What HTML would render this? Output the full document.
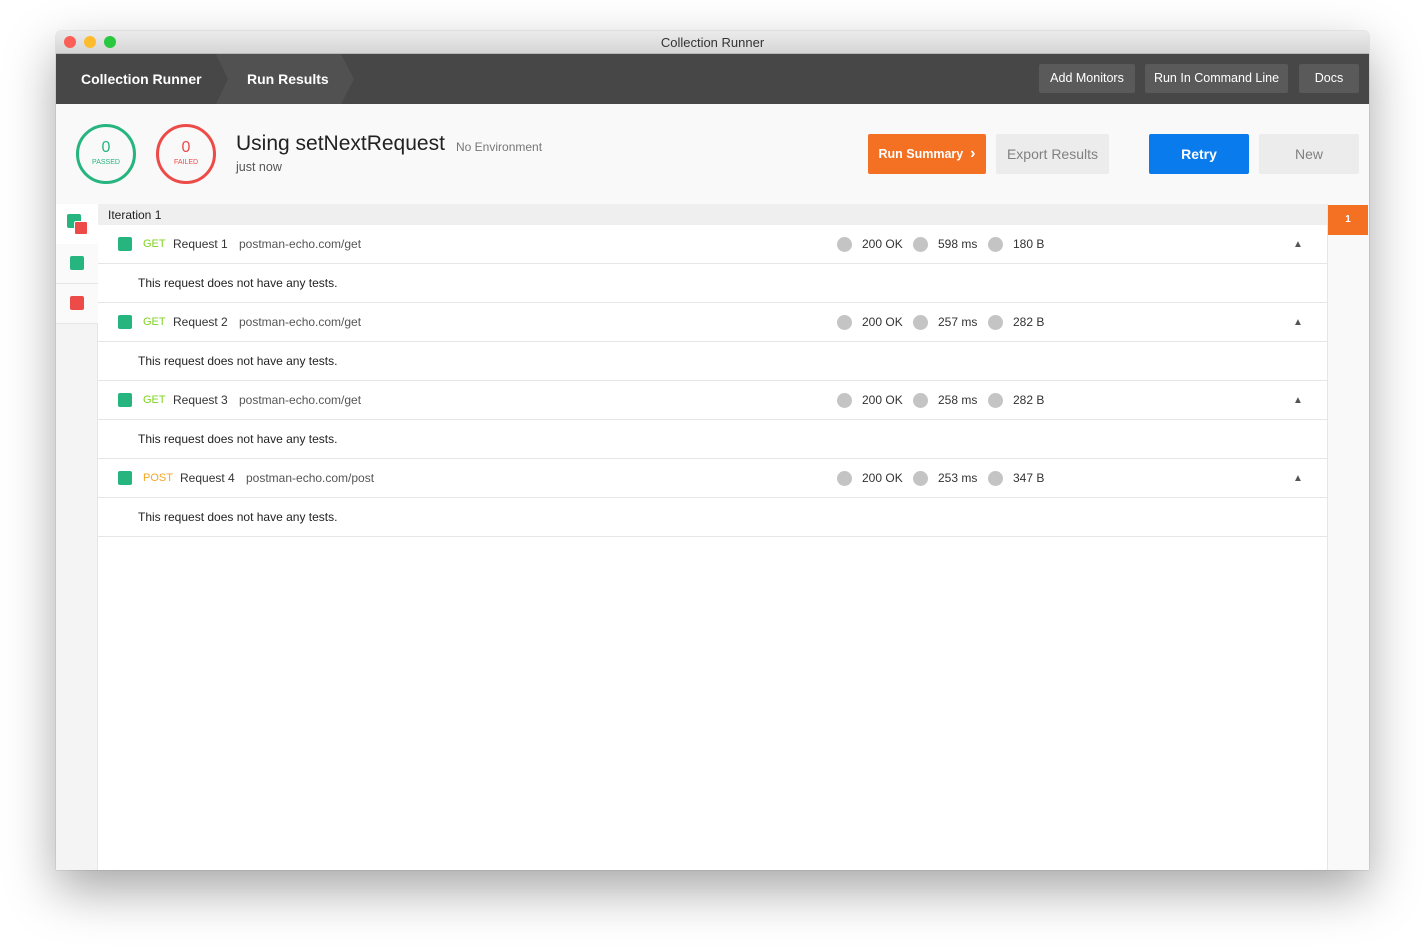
<!DOCTYPE html>
<html><head><meta charset="utf-8"><style>
*{margin:0;padding:0;box-sizing:border-box}
body{width:1425px;height:950px;background:#fff;font-family:"Liberation Sans",sans-serif;position:relative;overflow:hidden}
.win{position:absolute;left:56px;top:31px;width:1313px;height:839px;background:#fff;box-shadow:0 20px 50px rgba(0,0,0,.35),0 0 1px rgba(0,0,0,.4);border-radius:5px 5px 0 0;overflow:hidden}
.tb{height:23px;background:linear-gradient(#ebebeb,#d6d6d6);border-bottom:1px solid #b8b8b8;text-align:center;font-size:13px;line-height:23px;color:#333;position:relative}
.dot{position:absolute;top:5px;width:12px;height:12px;border-radius:50%}
.hdr{position:absolute;top:23px;left:0;width:1313px;height:50px;background:#474747}
.hdr .t{position:absolute;top:0;height:50px;line-height:50px;color:#fff;font-size:14px;font-weight:bold}
.hb{position:absolute;top:10px;height:29px;line-height:29px;background:#5a5a5a;color:#fff;font-size:12.5px;border-radius:2px;text-align:center}
.abs{position:absolute}
.circ{position:absolute;top:93px;width:60px;height:60px;border-radius:50%;border:3px solid;text-align:center}
.circ b{display:block;font-weight:normal;font-size:16px;margin-top:12px}
.circ i{display:block;font-style:normal;font-size:7px;margin-top:2px}
.btn{position:absolute;top:103px;height:40px;line-height:40px;text-align:center;font-size:14px;border-radius:2px}
.row{position:absolute;left:42px;width:1229px;height:39px;border-bottom:1px solid #e6e6e6;background:#fff;font-size:12px;color:#333}
.row span{position:absolute;top:0;line-height:39px}
.sq{position:absolute;width:14px;height:14px;border-radius:2px;background:#26b47f}
.gd{position:absolute;top:12px;width:15px;height:15px;border-radius:50%;background:#c4c4c4}
</style></head><body>
<div class="win">
<div class="tb">Collection Runner
<div class="dot" style="left:8px;background:#fc5f57"></div><div class="dot" style="left:28px;background:#fdbc2e"></div><div class="dot" style="left:48px;background:#28c840"></div></div>
<div class="hdr">
<svg class="abs" style="left:160px;top:0" width="140" height="50"><polygon points="0,0 125,0 138,25 125,50 0,50 12,25" fill="#515151"/></svg>
<div class="t" style="left:25px">Collection Runner</div>
<div class="t" style="left:191px">Run Results</div>
<div class="hb" style="left:983px;width:96px">Add Monitors</div>
<div class="hb" style="left:1089px;width:143px">Run In Command Line</div>
<div class="hb" style="left:1243px;width:60px">Docs</div>
</div>
<div class="abs" style="top:73px;left:0;width:1313px;height:766px;background:#f9f9f9"></div>
<div class="circ" style="left:20px;border-color:#26b47f;color:#26b47f"><b>0</b><i>PASSED</i></div>
<div class="circ" style="left:100px;border-color:#ed4b48;color:#ed4b48"><b>0</b><i>FAILED</i></div>
<div class="abs" style="left:180px;top:101px;font-size:21px;color:#222">Using setNextRequest</div>
<div class="abs" style="left:400px;top:109px;font-size:12px;color:#777">No Environment</div>
<div class="abs" style="left:180px;top:129px;font-size:12.5px;color:#555">just now</div>
<div class="btn" style="left:812px;width:118px;background:#f47023;color:#fff;font-size:12.5px;font-weight:bold">Run Summary &nbsp;<span style="font-size:16px">›</span></div>
<div class="btn" style="left:940px;width:113px;background:#ececec;color:#808080">Export Results</div>
<div class="btn" style="left:1093px;width:100px;background:#097bed;color:#fff;font-weight:bold">Retry</div>
<div class="btn" style="left:1203px;width:100px;background:#ececec;color:#808080">New</div>
<div class="abs" style="left:0;top:173px;width:42px;height:666px;background:#f4f4f4;border-right:1px solid #e6e6e6"></div>
<div class="abs" style="left:0;top:173px;width:42px;height:40px;background:#fff"></div>
<div class="sq" style="left:11px;top:183px"></div>
<div class="sq" style="left:18px;top:190px;background:#ed4b48;border:1px solid #fff"></div>
<div class="abs" style="left:0;top:213px;width:42px;height:40px;background:#fafafa;border-bottom:1px solid #e6e6e6"></div>
<div class="sq" style="left:14px;top:225px"></div>
<div class="abs" style="left:0;top:253px;width:42px;height:40px;background:#fafafa;border-bottom:1px solid #e6e6e6"></div>
<div class="sq" style="left:14px;top:265px;background:#ed4b48"></div>
<div class="abs" style="left:42px;top:173px;width:1229px;height:666px;background:#fff"></div>
<div class="abs" style="left:42px;top:173px;width:1229px;height:21px;background:#efefef;font-size:12px;line-height:22px;padding-left:10px;color:#222">Iteration 1</div>
<div class="abs" style="left:1271px;top:173px;width:42px;height:666px;background:#f9f9f9;border-left:1px solid #e6e6e6"></div>
<div class="abs" style="left:1272px;top:174px;width:40px;height:30px;background:#f47023;color:#fff;font-size:10px;font-weight:bold;text-align:center;line-height:30px">1</div>
<div id="rows"></div>
</div>
<script>
var d=[["GET","Request 1","postman-echo.com/get","598 ms","180 B"],["GET","Request 2","postman-echo.com/get","257 ms","282 B"],["GET","Request 3","postman-echo.com/get","258 ms","282 B"],["POST","Request 4","postman-echo.com/post","253 ms","347 B"]];
var h="";d.forEach(function(r,i){var y=194+i*78;var post=r[0]=="POST";
h+='<div class="row" style="top:'+y+'px"><div class="sq" style="left:20px;top:12px"></div><span style="left:45px;font-size:11px;color:'+(post?'#f6a623':'#7ed321')+'">'+r[0]+'</span><span style="left:'+(post?82:75)+'px">'+r[1]+'</span><span style="left:'+(post?148:141)+'px;color:#555">'+r[2]+'</span><div class="gd" style="left:739px"></div><span style="left:764px">200 OK</span><div class="gd" style="left:815px"></div><span style="left:840px">'+r[3]+'</span><div class="gd" style="left:890px"></div><span style="left:915px">'+r[4]+'</span><span style="left:1195px;font-size:10px;color:#555">▲</span></div>';
h+='<div class="row" style="top:'+(y+39)+'px;height:39px"><span style="left:40px;color:#222">This request does not have any tests.</span></div>';});
document.getElementById("rows").outerHTML=h;
</script>
</body></html>
